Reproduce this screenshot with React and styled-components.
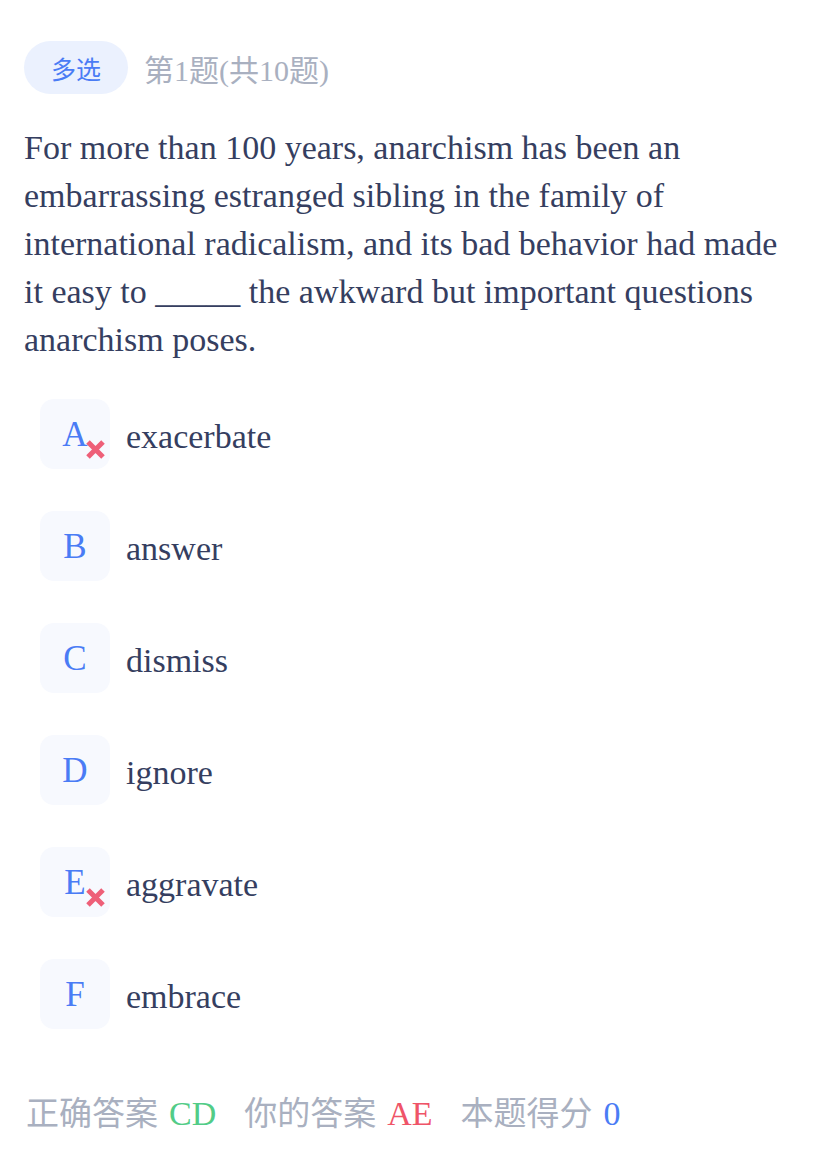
import React from "react";
import styled, { createGlobalStyle } from "styled-components";

const Global = createGlobalStyle`
  html, body { margin: 0; padding: 0; background: #fff; }
  body { font-family: "Liberation Serif", "Noto Sans CJK SC", serif; }
`;

const Page = styled.div`
  padding: 41px 24px 40px 24px;
  display: flex;
  flex-direction: column;
`;

const Header = styled.div`
  display: flex;
  align-items: center;
  gap: 16px;
`;

const Tag = styled.span`
  display: inline-flex;
  align-items: center;
  justify-content: center;
  height: 53px;
  padding: 0 27px;
  border-radius: 27px;
  background: #ebf1fe;
  color: #4a7cf5;
  font-size: 25px;
  font-family: "Noto Sans CJK SC", sans-serif;
`;

const Count = styled.span`
  color: #a9b0c0;
  font-size: 30px;
  font-family: "Liberation Serif", "Noto Sans CJK SC", serif;
`;

const Question = styled.p`
  margin: 30px 0 0 0;
  max-width: 762px;
  font-size: 34px;
  line-height: 48px;
  color: #353e60;
`;

const Options = styled.div`
  display: flex;
  flex-direction: column;
  gap: 42px;
  margin: 35px 0 0 16px;
`;

const Row = styled.div`
  display: flex;
  align-items: center;
  gap: 16px;
`;

const Letter = styled.div`
  position: relative;
  width: 70px;
  height: 70px;
  border-radius: 14px;
  background: #f7f9fe;
  color: #4a7cf5;
  font-size: 35px;
  display: flex;
  align-items: center;
  justify-content: center;
  padding-top: 1px;
  box-sizing: border-box;
`;

const Wrong = styled.svg`
  position: absolute;
  left: 44px;
  top: 39px;
  width: 23px;
  height: 23px;
`;

const OptText = styled.span`
  font-size: 34px;
  color: #353e60;
  padding-top: 5px;
`;

const Footer = styled.div`
  display: flex;
  gap: 28px;
  margin: 58px 0 0 2px;
  font-size: 34px;
  color: #a9b0c0;
`;

const Item = styled.span`
  display: inline-flex;
  gap: 11px;
  align-items: baseline;
`;

const Label = styled.span`
  font-family: "Noto Sans CJK SC", sans-serif;
  font-size: 33px;
`;

const Value = styled.span`
  color: ${(p) => p.$color};
`;

const options = [
  { k: "A", t: "exacerbate", wrong: true },
  { k: "B", t: "answer" },
  { k: "C", t: "dismiss" },
  { k: "D", t: "ignore" },
  { k: "E", t: "aggravate", wrong: true },
  { k: "F", t: "embrace" },
];

export default function App() {
  return (
    <>
      <Global />
      <Page>
        <Header>
          <Tag>多选</Tag>
          <Count>第1题(共10题)</Count>
        </Header>
        <Question>
          For more than 100 years, anarchism has been an embarrassing estranged
          sibling in the family of international radicalism, and its bad
          behavior had made it easy to _____ the awkward but important questions
          anarchism poses.
        </Question>
        <Options>
          {options.map((o) => (
            <Row key={o.k}>
              <Letter>
                {o.k}
                {o.wrong && (
                  <Wrong viewBox="0 0 23 23">
                    <path
                      d="M4 4 L19 19 M19 4 L4 19"
                      stroke="#ee5f78"
                      strokeWidth="5"
                      strokeLinecap="butt"
                    />
                  </Wrong>
                )}
              </Letter>
              <OptText>{o.t}</OptText>
            </Row>
          ))}
        </Options>
        <Footer>
          <Item>
            <Label>正确答案</Label>
            <Value $color="#52cc87">CD</Value>
          </Item>
          <Item>
            <Label>你的答案</Label>
            <Value $color="#ef5468">AE</Value>
          </Item>
          <Item>
            <Label>本题得分</Label>
            <Value $color="#4a7cf5">0</Value>
          </Item>
        </Footer>
      </Page>
    </>
  );
}
